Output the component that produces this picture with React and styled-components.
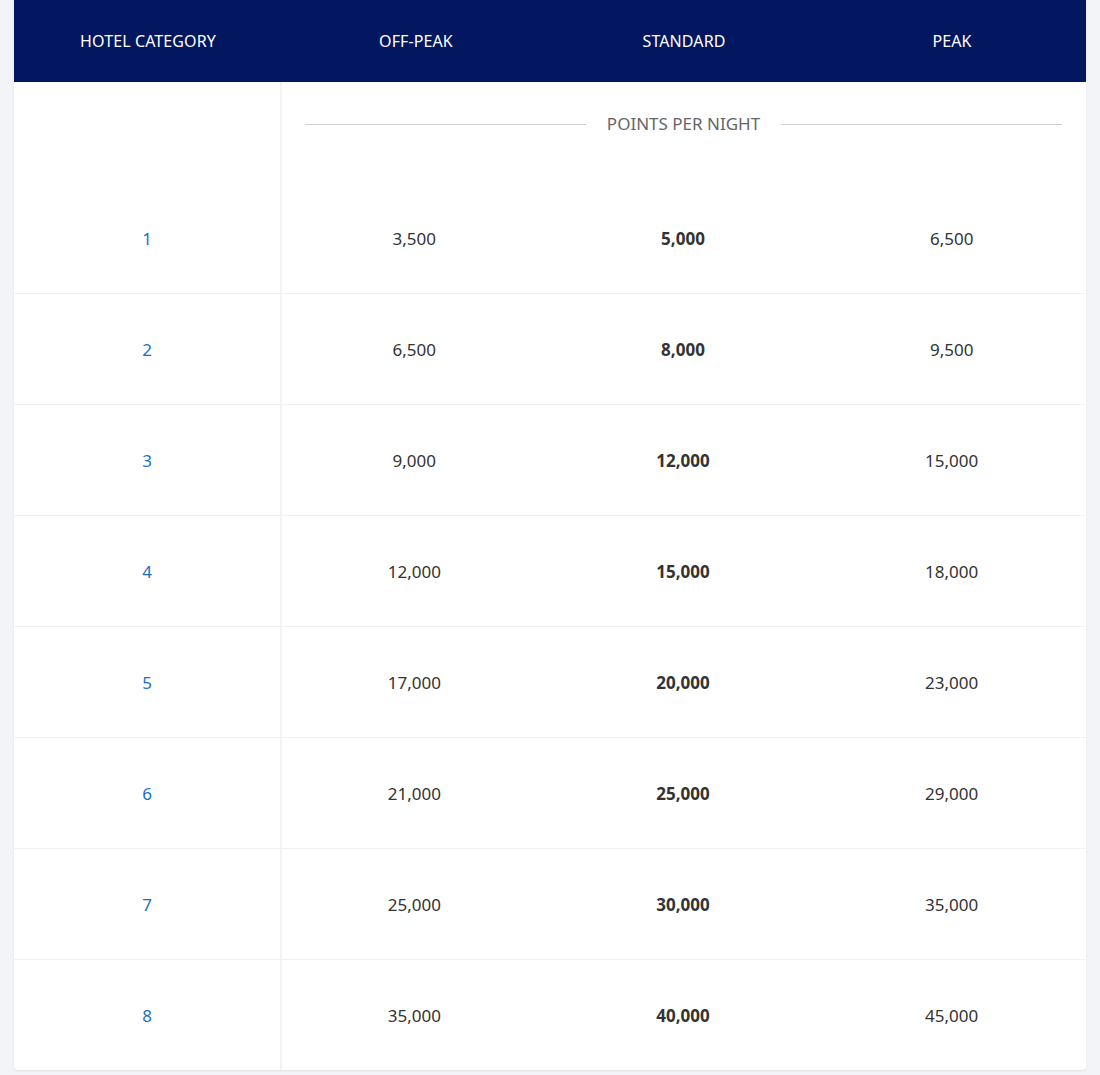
import React from "react";
import styled, { createGlobalStyle } from "styled-components";

const GlobalStyle = createGlobalStyle`
  body {
    margin: 0;
    background: #f3f4f8;
    font-family: "Noto Sans", "Open Sans", sans-serif;
  }
`;

const Page = styled.div`
  padding: 0 14px 11px;
`;

const Table = styled.div`
  background: #fff;
  border-radius: 0 0 4px 4px;
  box-shadow: 0 1px 2px rgba(0, 0, 0, 0.08);
  overflow: hidden;
`;

const HeadRow = styled.div`
  display: grid;
  grid-template-columns: repeat(4, 1fr);
  height: 82px;
  background: #031760;
`;

const HeadCell = styled.div`
  display: flex;
  align-items: center;
  justify-content: center;
  color: #fff;
  font-size: 16px;
  letter-spacing: 0.1px;
`;

const Row = styled.div`
  display: grid;
  grid-template-columns: 268px 1fr;
  height: ${({ $h }) => $h}px;
  border-top: ${({ $line }) => ($line ? "1px solid #eff1f5" : "none")};
  box-sizing: border-box;
`;

const CategoryCell = styled.div`
  display: flex;
  align-items: center;
  justify-content: center;
  border-right: 2px solid #f2f2f7;
  color: #1a6fc6;
  font-size: 17px;
`;

const Values = styled.div`
  display: grid;
  grid-template-columns: repeat(3, 1fr);
  margin-left: -2px;
`;

const Value = styled.div`
  display: flex;
  align-items: center;
  justify-content: center;
  color: #333;
  font-size: 17px;
  font-weight: ${({ $bold }) => ($bold ? 700 : 400)};
`;

const Subhead = styled.div`
  display: flex;
  align-items: flex-start;
  gap: 21px;
  padding: 30px 24px 0 23px;
`;

const Rule = styled.div`
  flex: 1;
  height: 1px;
  background: #cfcfcf;
  margin-top: 12px;
`;

const SubheadText = styled.span`
  color: #666;
  font-size: 17px;
  line-height: 24px;
`;

const rows = [
  ["1", "3,500", "5,000", "6,500"],
  ["2", "6,500", "8,000", "9,500"],
  ["3", "9,000", "12,000", "15,000"],
  ["4", "12,000", "15,000", "18,000"],
  ["5", "17,000", "20,000", "23,000"],
  ["6", "21,000", "25,000", "29,000"],
  ["7", "25,000", "30,000", "35,000"],
  ["8", "35,000", "40,000", "45,000"],
];

export default function App() {
  return (
    <Page>
      <GlobalStyle />
      <Table>
        <HeadRow>
          <HeadCell>HOTEL CATEGORY</HeadCell>
          <HeadCell>OFF-PEAK</HeadCell>
          <HeadCell>STANDARD</HeadCell>
          <HeadCell>PEAK</HeadCell>
        </HeadRow>
        <Row $h={101}>
          <CategoryCell />
          <Subhead>
            <Rule />
            <SubheadText>POINTS PER NIGHT</SubheadText>
            <Rule />
          </Subhead>
        </Row>
        {rows.map(([cat, off, std, peak], i) => (
          <Row key={cat} $h={i === 0 ? 110 : 111} $line={i > 0}>
            <CategoryCell>{cat}</CategoryCell>
            <Values>
              <Value>{off}</Value>
              <Value $bold>{std}</Value>
              <Value>{peak}</Value>
            </Values>
          </Row>
        ))}
      </Table>
    </Page>
  );
}
